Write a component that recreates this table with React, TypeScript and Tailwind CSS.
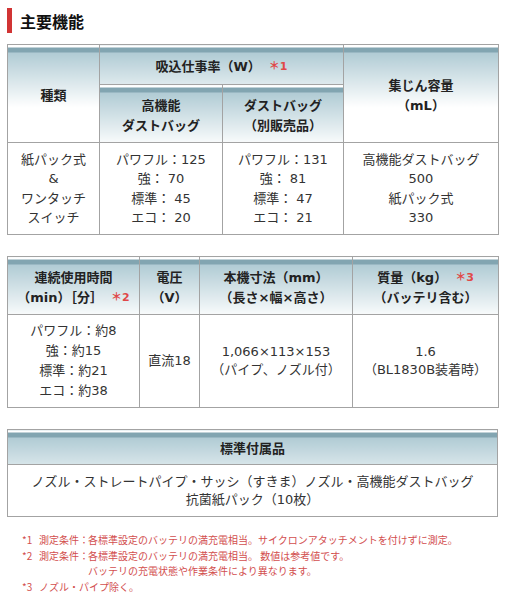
const HEAD =
  "border border-[#a3a3a3] font-bold text-[#222] align-middle text-center bg-[linear-gradient(180deg,#fff_0px,#fff_2px,#82a5b1_2px,#82a5b1_7px,#b0cbd4_7px,#fff_62px)] pt-[4px]";
const CELL = "border border-[#a3a3a3] text-[#333] align-middle text-center";

function Note({ n }: { n: string }) {
  return <sup className="ml-[8px] text-[11px] font-bold text-[#e04848] relative -top-[1px]">＊{n}</sup>;
}

export default function App() {
  return (
    <div className="w-[507px] h-[602px] bg-white pl-[7px] pr-[9px] pt-[8px] font-['DejaVu_Sans','Noto_Sans_CJK_JP',sans-serif] text-[13px] leading-5">
      <div className="flex items-center h-[25px]">
        <div className="w-[5px] h-[25px] bg-[#d13434]" />
        <h2 className="ml-[8px] text-[16px] font-bold text-[#111] font-['Noto_Sans_CJK_JP',sans-serif] leading-none">主要機能</h2>
      </div>

      <table className="mt-[11px] w-[491px] table-fixed border-collapse">
        <colgroup>
          <col className="w-[92px]" />
          <col className="w-[123px]" />
          <col className="w-[121px]" />
          <col className="w-[155px]" />
        </colgroup>
        <tbody>
          <tr className="h-[40px]">
            <th rowSpan={2} className={HEAD}>種類</th>
            <th colSpan={2} className={HEAD}>吸込仕事率（W）<Note n="1" /></th>
            <th rowSpan={2} className={HEAD}>集じん容量<br />（mL）</th>
          </tr>
          <tr className="h-[58px]">
            <th className={HEAD}>高機能<br />ダストバッグ</th>
            <th className={HEAD}>ダストバッグ<br />（別販売品）</th>
          </tr>
          <tr className="h-[92px]">
            <td className={`${CELL} leading-[19.5px]`}>紙パック式<br />&amp;<br />ワンタッチ<br />スイッチ</td>
            <td className={`${CELL} leading-[19.5px]`}>パワフル：125<br />強：&nbsp;70<br />標準：&nbsp;45<br />エコ：&nbsp;20</td>
            <td className={`${CELL} leading-[19.5px]`}>パワフル：131<br />強：&nbsp;81<br />標準：&nbsp;47<br />エコ：&nbsp;21</td>
            <td className={`${CELL} leading-[19.5px]`}>高機能ダストバッグ<br />500<br />紙パック式<br />330</td>
          </tr>
        </tbody>
      </table>

      <table className="mt-[21px] w-[491px] table-fixed border-collapse">
        <colgroup>
          <col className="w-[132px]" />
          <col className="w-[60px]" />
          <col className="w-[153px]" />
          <col className="w-[146px]" />
        </colgroup>
        <tbody>
          <tr className="h-[58px]">
            <th className={HEAD}>連続使用時間<br />（min）［分］<Note n="2" /></th>
            <th className={HEAD}>電圧<br />（V）</th>
            <th className={HEAD}>本機寸法（mm）<br />（長さ×幅×高さ）</th>
            <th className={HEAD}>質量（kg）<Note n="3" /><br />（バッテリ含む）</th>
          </tr>
          <tr className="h-[93px]">
            <td className={CELL}>パワフル：約8<br />強：約15<br />標準：約21<br />エコ：約38</td>
            <td className={CELL}>直流18</td>
            <td className={`${CELL} leading-[18px]`}>1,066×113×153<br />（パイプ、ノズル付）</td>
            <td className={`${CELL} leading-[18px]`}>1.6<br />（BL1830B装着時）</td>
          </tr>
        </tbody>
      </table>

      <table className="mt-[21px] w-[491px] table-fixed border-collapse">
        <tbody>
          <tr className="h-[35px]">
            <th className={HEAD}>標準付属品</th>
          </tr>
          <tr className="h-[52px]">
            <td className={`${CELL} leading-[18px]`}>ノズル・ストレートパイプ・サッシ（すきま）ノズル・高機能ダストバッグ<br />抗菌紙パック（10枚）</td>
          </tr>
        </tbody>
      </table>

      <div className="mt-[15px] pl-[15px] text-[10px] leading-[15.5px] text-[#d24e4e] font-['Noto_Sans_CJK_JP',sans-serif] whitespace-nowrap">
        <div className="flex">
          <span className="w-[17px] shrink-0">*1</span>
          <span className="w-[49px] shrink-0">測定条件：</span>
          <span>各標準設定のバッテリの満充電相当。サイクロンアタッチメントを付けずに測定。</span>
        </div>
        <div className="flex">
          <span className="w-[17px] shrink-0">*2</span>
          <span className="w-[49px] shrink-0">測定条件：</span>
          <span>各標準設定のバッテリの満充電相当。 数値は参考値です。<br />バッテリの充電状態や作業条件により異なります。</span>
        </div>
        <div className="flex">
          <span className="w-[17px] shrink-0">*3</span>
          <span>ノズル・パイプ除く。</span>
        </div>
      </div>
    </div>
  );
}
